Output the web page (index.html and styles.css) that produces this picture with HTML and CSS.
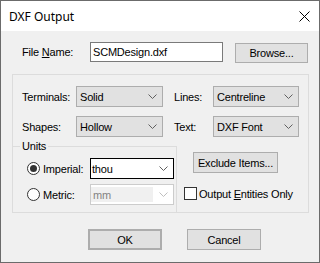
FILE: index.html
```html
<!DOCTYPE html>
<html lang="en">

<head>
  <meta charset="UTF-8">
  <title>DXF Output</title>
  <link rel="stylesheet" href="styles.css">
</head>

<body>
  <div class="window">
    <div class="titlebar">
      <span class="title">DXF Output</span>
      <svg class="close" width="11" height="11" viewBox="0 0 11 11">
        <path d="M0.5 0.5 L10.5 10.5 M10.5 0.5 L0.5 10.5" stroke="#000" stroke-width="1" fill="none" />
      </svg>
    </div>

    <div class="client">
      <div class="file-row">
        <label class="file-label">File <u>N</u>ame:</label>
        <div class="textbox">SCMDesign.dxf</div>
        <button class="btn browse" type="button">Browse...</button>
      </div>

      <div class="group">
        <div class="combos">
          <div class="combo-row">
            <span class="lbl lbl-a">Terminals:</span>
            <div class="combo combo-a">
              <span>Solid</span>
              <svg class="chev" width="9" height="5" viewBox="0 0 9 5"><polyline points="0.5,0.5 4.5,4.5 8.5,0.5" /></svg>
            </div>
            <span class="lbl lbl-b">Lines:</span>
            <div class="combo combo-b">
              <span>Centreline</span>
              <svg class="chev" width="9" height="5" viewBox="0 0 9 5"><polyline points="0.5,0.5 4.5,4.5 8.5,0.5" /></svg>
            </div>
          </div>
          <div class="combo-row">
            <span class="lbl lbl-a">Shapes:</span>
            <div class="combo combo-a">
              <span>Hollow</span>
              <svg class="chev" width="9" height="5" viewBox="0 0 9 5"><polyline points="0.5,0.5 4.5,4.5 8.5,0.5" /></svg>
            </div>
            <span class="lbl lbl-b">Text:</span>
            <div class="combo combo-b">
              <span>DXF Font</span>
              <svg class="chev" width="9" height="5" viewBox="0 0 9 5"><polyline points="0.5,0.5 4.5,4.5 8.5,0.5" /></svg>
            </div>
          </div>
        </div>

        <div class="bottom">
          <fieldset class="units">
            <legend>Units</legend>
            <div class="radio-row">
              <span class="radio checked"></span>
              <span class="radio-label">Imperial:</span>
              <div class="combo edit">
                <span>thou</span>
                <svg class="chev" width="9" height="5" viewBox="0 0 9 5"><polyline points="0.5,0.5 4.5,4.5 8.5,0.5" /></svg>
              </div>
            </div>
            <div class="radio-row second">
              <span class="radio"></span>
              <span class="radio-label">Metric:</span>
              <div class="combo disabled">
                <span class="field">mm</span>
                <svg class="chev" width="9" height="5" viewBox="0 0 9 5"><polyline points="0.5,0.5 4.5,4.5 8.5,0.5" /></svg>
              </div>
            </div>
          </fieldset>

          <div class="side">
            <button class="btn exclude" type="button">Exclude Items...</button>
            <div class="check-row">
              <span class="checkbox"></span>
              <span class="check-label">Output <u>E</u>ntities Only</span>
            </div>
          </div>
        </div>
      </div>

      <div class="actions">
        <button class="btn ok" type="button">OK</button>
        <button class="btn cancel" type="button">Cancel</button>
      </div>
    </div>
  </div>
</body>

</html>
```

FILE: styles.css
```css
body {
  margin: 0;
  padding: 0;
  background-color: #f0f0f0;
}

.window {
  width: 320px;
  height: 263px;
  box-sizing: border-box;
  border: 1px solid #6b6b6b;
  background-color: #f0f0f0;
  font-family: "Liberation Sans", Arial, sans-serif;
  font-size: 11px;
  letter-spacing: -0.2px;
  color: #000;
}

.titlebar {
  height: 30px;
  background-color: #fff;
  display: flex;
  align-items: center;
  justify-content: space-between;
  padding: 0 9px 0 8px;
}

.title {
  font-family: "Noto Sans", sans-serif;
  font-size: 12px;
  letter-spacing: 0;
}

.close {
  display: block;
}

.client {
  padding-top: 11px;
}

/* file name row */
.file-row {
  display: flex;
  align-items: flex-start;
  padding-left: 21px;
  height: 21px;
}

.file-label {
  width: 68px;
  line-height: 20px;
}

.textbox {
  width: 133px;
  height: 20px;
  box-sizing: border-box;
  border: 1px solid #7a7a7a;
  background-color: #fff;
  padding-left: 2px;
  line-height: 18px;
}

.btn {
  font: inherit;
  letter-spacing: inherit;
  color: #000;
  background-color: #e1e1e1;
  border: 1px solid #adadad;
  padding: 0;
  box-sizing: border-box;
  height: 21px;
}

.browse {
  margin-left: 12px;
  margin-top: 1px;
  width: 73px;
  height: 20px;
}

/* options group */
.group {
  margin: 11px 0 0 11px;
  width: 297px;
  height: 139px;
  box-sizing: border-box;
  border: 1px solid #dcdcdc;
  display: flex;
  flex-direction: column;
}

.combos {
  padding: 11px 0 0 9px;
  display: flex;
  flex-direction: column;
  gap: 9px;
}

.combo-row {
  display: flex;
  align-items: center;
  height: 21px;
}

.lbl-a {
  width: 54px;
}

.combo-a {
  width: 87px;
}

.lbl-b {
  margin-left: 11px;
  width: 39px;
}

.combo-b {
  width: 86px;
}

.combo {
  height: 21px;
  box-sizing: border-box;
  border: 1px solid #adadad;
  background-color: #e1e1e1;
  display: flex;
  align-items: center;
  justify-content: space-between;
  padding: 0 5px 0 3px;
}

.chev {
  display: block;
  fill: none;
  stroke: #606060;
}

.bottom {
  flex: 1;
  display: flex;
  margin-top: 3px;
}

.units {
  margin: 0;
  min-width: 0;
  width: 164px;
  box-sizing: border-box;
  border: 0;
  border-top: 1px solid #dcdcdc;
  border-right: 1px solid #dcdcdc;
  padding: 6px 0 0 7px;
}

.units legend {
  padding: 0 2px;
  line-height: 12px;
}

.radio-row {
  display: flex;
  align-items: center;
  height: 21px;
  padding-left: 7px;
}

.radio-row.second {
  margin-top: 5px;
}

.radio {
  width: 13px;
  height: 13px;
  box-sizing: border-box;
  border: 1px solid #333;
  border-radius: 50%;
  background-color: #fff;
  display: flex;
  align-items: center;
  justify-content: center;
}

.radio.checked::after {
  content: "";
  width: 7px;
  height: 7px;
  border-radius: 50%;
  background-color: #333;
}

.radio-label {
  margin-left: 3px;
  width: 47px;
}

.combo.edit {
  width: 84px;
  background-color: #fff;
  border-color: #000;
  padding-left: 1px;
}

.combo.disabled {
  width: 84px;
  background-color: #fff;
  border-color: #cccccc;
  padding-left: 0;
  color: #838383;
  align-items: stretch;
}

.combo.disabled .field {
  width: 60px;
  margin: 2px 0;
  padding-left: 2px;
  background-color: #f0f0f0;
  display: flex;
  align-items: center;
}

.combo.disabled .chev {
  stroke: #bfbfbf;
  align-self: center;
}

.side {
  flex: 1;
  padding: 12px 0 0 7px;
}

.exclude {
  margin-left: 9px;
  width: 85px;
  display: block;
}

.check-row {
  display: flex;
  align-items: center;
  height: 13px;
  margin-top: 14px;
}

.checkbox {
  width: 13px;
  height: 13px;
  box-sizing: border-box;
  border: 1px solid #333;
  background-color: #fff;
}

.check-label {
  margin-left: 2px;
}

/* dialog buttons */
.actions {
  display: flex;
  gap: 25px;
  margin-top: 16px;
  padding-left: 87px;
}

.actions .btn {
  width: 74px;
}

.ok {
  border: 2px solid #adadad;
}
```
